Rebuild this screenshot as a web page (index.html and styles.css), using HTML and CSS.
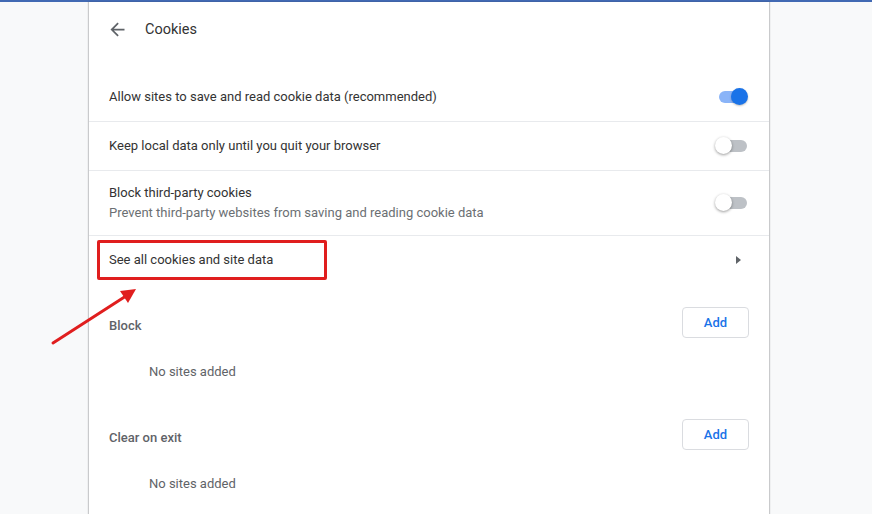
FILE: index.html
```html
<!DOCTYPE html>
<html>
<head>
<meta charset="utf-8">
<link rel="stylesheet" href="styles.css">
</head>
<body>
<div class="topbar"></div>
<div class="page">
  <div class="card">
    <div class="header">
      <svg class="back" width="20" height="20" viewBox="0 0 24 24"><path d="M20 11H7.83l5.59-5.59L12 4l-8 8 8 8 1.41-1.41L7.83 13H20v-2z" fill="#5f6368"/></svg>
      <span class="title">Cookies</span>
    </div>
    <div class="row first">
      <div class="label">Allow sites to save and read cookie data (recommended)</div>
      <div class="toggle on"><span class="track"></span><span class="knob"></span></div>
    </div>
    <div class="row">
      <div class="label">Keep local data only until you quit your browser</div>
      <div class="toggle"><span class="track"></span><span class="knob"></span></div>
    </div>
    <div class="row tall">
      <div class="label">Block third-party cookies<div class="secondary">Prevent third-party websites from saving and reading cookie data</div></div>
      <div class="toggle"><span class="track"></span><span class="knob"></span></div>
    </div>
    <div class="row link">
      <div class="label">See all cookies and site data</div>
      <span class="caret"></span>
      <div class="highlight"></div>
    </div>
    <div class="section">
      <div class="section-head">
        <span class="section-title">Block</span>
        <button class="add">Add</button>
      </div>
      <div class="empty">No sites added</div>
    </div>
    <div class="section">
      <div class="section-head">
        <span class="section-title">Clear on exit</span>
        <button class="add">Add</button>
      </div>
      <div class="empty">No sites added</div>
    </div>
  </div>
</div>
<svg class="annot" width="872" height="514" viewBox="0 0 872 514">
  <line x1="53" y1="343" x2="126" y2="296" stroke="#e01e1e" stroke-width="3" stroke-linecap="round"/>
  <polygon points="136,289 120,291 128,303" fill="#e01e1e"/>
</svg>
</body>
</html>
```
FILE: styles.css
```css
html, body {
  margin: 0;
  padding: 0;
}
body {
  background: #f8f9fa;
  font-family: Roboto, "Noto Sans", sans-serif;
  color: #333;
  width: 872px;
  height: 514px;
  overflow: hidden;
  position: relative;
}
.topbar {
  height: 2px;
  background: #4169b3;
}
.page {
  display: flex;
  padding-left: 89px;
}
.card {
  width: 680px;
  height: 512px;
  background: #fff;
  box-shadow: -1px 0 1px rgba(60,64,67,0.25), 1px 0 1px rgba(60,64,67,0.25);
}
.header {
  height: 54px;
  display: flex;
  align-items: center;
  padding-left: 18px;
  margin-bottom: 17px;
}
.back {
  width: 21px;
  height: 21px;
}
.title {
  margin-left: 17px;
  font-size: 14.5px;
  color: #333;
}
.row {
  position: relative;
  display: flex;
  align-items: center;
  justify-content: space-between;
  min-height: 48px;
  padding: 0 20px;
  border-top: 1px solid #e8eaed;
  font-size: 13px;
}
.row.first {
  border-top: none;
}
.row.tall {
  min-height: 64px;
}
.label {
  line-height: 20px;
}
.secondary {
  color: #6b6f73;
}
.toggle {
  position: relative;
  width: 32px;
  height: 16px;
  margin-right: 1px;
}
.track {
  position: absolute;
  left: 3px;
  top: 2px;
  width: 28px;
  height: 12px;
  border-radius: 6px;
  background: #bdc1c6;
}
.knob {
  position: absolute;
  left: -1px;
  top: -1px;
  width: 17px;
  height: 17px;
  border-radius: 50%;
  background: #fff;
  box-shadow: 0 1px 3px rgba(0,0,0,0.4);
}
.toggle.on .track {
  background: #8ab4f8;
}
.toggle.on .knob {
  left: 15px;
  background: #1a73e8;
  box-shadow: 0 1px 2px rgba(0,0,0,0.25);
}
.caret {
  width: 0;
  height: 0;
  border-top: 4px solid transparent;
  border-bottom: 4px solid transparent;
  border-left: 5px solid #5f6368;
  margin-right: 8px;
}
.highlight {
  position: absolute;
  left: 8px;
  top: 4px;
  width: 224px;
  height: 34px;
  border: 3px solid #e01e1e;
  border-radius: 2px;
}
.section {
  padding-top: 14px;
}
.section-head {
  display: flex;
  align-items: center;
  justify-content: space-between;
  height: 48px;
  padding: 0 20px;
}
.section-title {
  font-size: 13px;
  font-weight: 500;
  color: #5f6368;
  margin-top: 6px;
}
.add {
  width: 67px;
  height: 31px;
  background: #fff;
  border: 1px solid #dadce0;
  border-radius: 4px;
  color: #1a73e8;
  font-family: Roboto, "Noto Sans", sans-serif;
  font-size: 13px;
  font-weight: 500;
  padding: 0;
}
.empty {
  height: 50px;
  display: flex;
  align-items: center;
  padding-left: 60px;
  font-size: 13px;
  color: #5f6368;
}
.annot {
  position: absolute;
  left: 0;
  top: 0;
  pointer-events: none;
}
```
